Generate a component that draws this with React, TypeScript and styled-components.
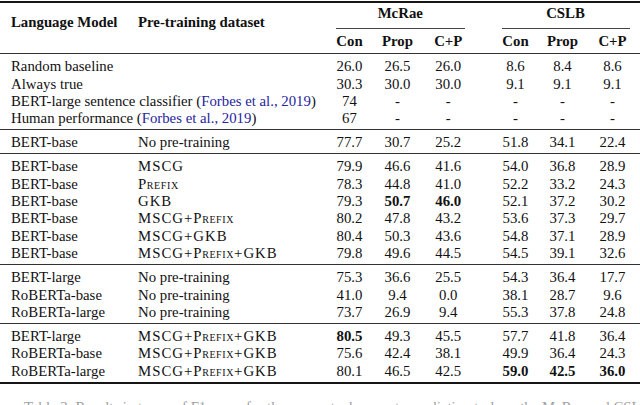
import styled, { createGlobalStyle } from "styled-components";

// Shared column template for header and body rows
const COLS = "138px 188px 47px 49px 52.5px 17px 48px 46px 54px";

const GlobalStyle = createGlobalStyle`
  html, body {
    margin: 0;
    padding: 0;
    background: #ffffff;
  }
  body {
    font-family: "Liberation Serif", "Times New Roman", serif;
    color: #111;
    overflow: hidden;
  }
`;

const Page = styled.div`
  width: 640px;
  height: 405px;
  overflow: hidden;
  font-size: 14.8px;
`;

const Table = styled.div`
  margin-top: 1px;
  border-top: 2px solid #151515;
  border-bottom: 2px solid #151515;
`;

const Header = styled.div`
  display: grid;
  grid-template-columns: ${COLS};
  grid-template-rows: 17.4px 6px 4.6px 17.4px;
  padding: 2.3px 0 2.5px;
  border-bottom: 1px solid #333;
  font-weight: bold;
  line-height: 17.4px;
`;

const HeadLabel = styled.div<{ $col: number; $pad?: number }>`
  grid-column: ${(p) => p.$col};
  grid-row: 1 / 5;
  align-self: start;
  padding-top: 8.9px;
  padding-left: ${(p) => p.$pad ?? 0}px;
  white-space: nowrap;
`;

const GroupTitle = styled.div<{ $cols: string }>`
  grid-column: ${(p) => p.$cols};
  grid-row: 1;
  text-align: center;
`;

const CMid = styled.div<{ $cols: string }>`
  grid-column: ${(p) => p.$cols};
  grid-row: 2;
  margin: 0 10px;
  border-bottom: 1px solid #444;
`;

const SubHead = styled.div<{ $col: number }>`
  grid-column: ${(p) => p.$col};
  grid-row: 4;
  text-align: center;
`;

const Group = styled.div<{ $first?: boolean }>`
  padding: 4px 0 1.6px;
  border-top: ${(p) => (p.$first ? "none" : "1px solid #333")};
`;

const Row = styled.div`
  display: grid;
  grid-template-columns: ${COLS};
  height: 17.4px;
  line-height: 17.4px;
`;

const Name = styled.div<{ $span?: boolean }>`
  grid-column: ${(p) => (p.$span ? "1 / 3" : "1")};
  padding-left: 11px;
  white-space: nowrap;
`;

const Dataset = styled.div`
  grid-column: 2;
  white-space: nowrap;
`;

const Caps = styled.span`
  letter-spacing: 1px;
`;

const Small = styled.span`
  font-variant: small-caps;
  letter-spacing: 0.6px;
`;

const Num = styled.div<{ $bold?: boolean; $gap?: boolean }>`
  text-align: center;
  font-weight: ${(p) => (p.$bold ? "bold" : "normal")};
  grid-column-start: ${(p) => (p.$gap ? 7 : "auto")};
`;

const Cite = styled.span`
  color: #25259c;
`;

const Caption = styled.div`
  margin-top: 15px;
  padding-left: 24px;
  color: #a0a0a0;
  line-height: 17.4px;
  white-space: nowrap;
`;

type Val = string | [string, boolean];

const DS = ({ name }: { name: string }) => {
  const parts = name.split("+");
  return (
    <>
      {parts.map((p, i) => (
        <span key={i}>
          {i > 0 && <Caps>+</Caps>}
          {p === "Prefix" ? <Small>Prefix</Small> : p === "No pre-training" ? p : <Caps>{p}</Caps>}
        </span>
      ))}
    </>
  );
};

const Vals = ({ vals }: { vals: Val[] }) => (
  <>
    {vals.map((v, i) => {
      const text = typeof v === "string" ? v : v[0];
      const bold = typeof v === "string" ? false : v[1];
      return (
        <Num key={i} $bold={bold} $gap={i === 3}>
          {text}
        </Num>
      );
    })}
  </>
);

const groups: { model: string; data: string; vals: Val[] }[][] = [
  [{ model: "BERT-base", data: "No pre-training", vals: ["77.7", "30.7", "25.2", "51.8", "34.1", "22.4"] }],
  [
    { model: "BERT-base", data: "MSCG", vals: ["79.9", "46.6", "41.6", "54.0", "36.8", "28.9"] },
    { model: "BERT-base", data: "Prefix", vals: ["78.3", "44.8", "41.0", "52.2", "33.2", "24.3"] },
    { model: "BERT-base", data: "GKB", vals: ["79.3", ["50.7", true], ["46.0", true], "52.1", "37.2", "30.2"] },
    { model: "BERT-base", data: "MSCG+Prefix", vals: ["80.2", "47.8", "43.2", "53.6", "37.3", "29.7"] },
    { model: "BERT-base", data: "MSCG+GKB", vals: ["80.4", "50.3", "43.6", "54.8", "37.1", "28.9"] },
    { model: "BERT-base", data: "MSCG+Prefix+GKB", vals: ["79.8", "49.6", "44.5", "54.5", "39.1", "32.6"] },
  ],
  [
    { model: "BERT-large", data: "No pre-training", vals: ["75.3", "36.6", "25.5", "54.3", "36.4", "17.7"] },
    { model: "RoBERTa-base", data: "No pre-training", vals: ["41.0", "9.4", "0.0", "38.1", "28.7", "9.6"] },
    { model: "RoBERTa-large", data: "No pre-training", vals: ["73.7", "26.9", "9.4", "55.3", "37.8", "24.8"] },
  ],
  [
    { model: "BERT-large", data: "MSCG+Prefix+GKB", vals: [["80.5", true], "49.3", "45.5", "57.7", "41.8", "36.4"] },
    { model: "RoBERTa-base", data: "MSCG+Prefix+GKB", vals: ["75.6", "42.4", "38.1", "49.9", "36.4", "24.3"] },
    {
      model: "RoBERTa-large",
      data: "MSCG+Prefix+GKB",
      vals: ["80.1", "46.5", "42.5", ["59.0", true], ["42.5", true], ["36.0", true]],
    },
  ],
];

export default function App() {
  return (
    <Page>
      <GlobalStyle />
      <Table>
        <Header>
          <HeadLabel $col={1} $pad={11}>Language Model</HeadLabel>
          <HeadLabel $col={2}>Pre-training dataset</HeadLabel>
          <GroupTitle $cols="3 / 6">McRae</GroupTitle>
          <GroupTitle $cols="7 / 10">CSLB</GroupTitle>
          <CMid $cols="3 / 6" />
          <CMid $cols="7 / 10" />
          <SubHead $col={3}>Con</SubHead>
          <SubHead $col={4}>Prop</SubHead>
          <SubHead $col={5}>C+P</SubHead>
          <SubHead $col={7}>Con</SubHead>
          <SubHead $col={8}>Prop</SubHead>
          <SubHead $col={9}>C+P</SubHead>
        </Header>

        <Group $first>
          <Row>
            <Name $span>Random baseline</Name>
            <Vals vals={["26.0", "26.5", "26.0", "8.6", "8.4", "8.6"]} />
          </Row>
          <Row>
            <Name $span>Always true</Name>
            <Vals vals={["30.3", "30.0", "30.0", "9.1", "9.1", "9.1"]} />
          </Row>
          <Row>
            <Name $span>
              BERT-large sentence classifier (<Cite>Forbes et al., 2019</Cite>)
            </Name>
            <Vals vals={["74", "-", "-", "-", "-", "-"]} />
          </Row>
          <Row>
            <Name $span>
              Human performance (<Cite>Forbes et al., 2019</Cite>)
            </Name>
            <Vals vals={["67", "-", "-", "-", "-", "-"]} />
          </Row>
        </Group>

        {groups.map((g, gi) => (
          <Group key={gi}>
            {g.map((r, ri) => (
              <Row key={ri}>
                <Name>{r.model}</Name>
                <Dataset>
                  <DS name={r.data} />
                </Dataset>
                <Vals vals={r.vals} />
              </Row>
            ))}
          </Group>
        ))}
      </Table>
      <Caption>
        Table 3: Results in terms of F1-score for the conceptual property prediction task on the McRae and CSLB datasets.
      </Caption>
    </Page>
  );
}
